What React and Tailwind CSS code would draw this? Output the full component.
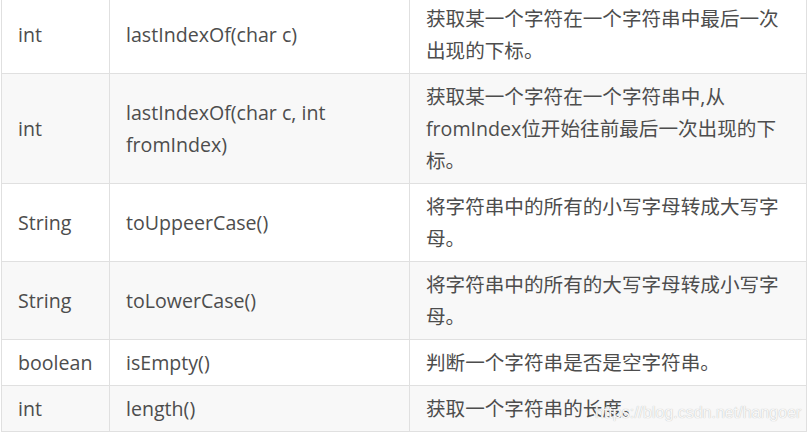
const rows = [
  { type: 'int', method: 'lastIndexOf(char c)', desc: '获取某一个字符在一个字符串中最后一次出现的下标。' },
  { type: 'int', method: 'lastIndexOf(char c, int fromIndex)', desc: '获取某一个字符在一个字符串中,从fromIndex位开始往前最后一次出现的下标。' },
  { type: 'String', method: 'toUppeerCase()', desc: '将字符串中的所有的小写字母转成大写字母。' },
  { type: 'String', method: 'toLowerCase()', desc: '将字符串中的所有的大写字母转成小写字母。' },
  { type: 'boolean', method: 'isEmpty()', desc: '判断一个字符串是否是空字符串。' },
  { type: 'int', method: 'length()', desc: '获取一个字符串的长度。' },
];

export default function App() {
  return (
    <div className="relative h-[434px] w-[810px] overflow-hidden bg-white pl-px font-['Open_Sans','Noto_Sans_CJK_SC',sans-serif] text-[19.6px] leading-[32px] text-[#4d4d4d]">
      <table className="-mt-[5px] table-fixed border-collapse">
        <colgroup>
          <col className="w-[108px]" />
          <col className="w-[300px]" />
          <col className="w-[397px]" />
        </colgroup>
        <tbody>
          {rows.map((r, i) => (
            <tr key={i} className={i % 2 === 1 ? 'bg-[#f8f8f8]' : 'bg-white'}>
              <td className="border border-[#e0e0e0] px-4 py-[6.5px] align-middle">{r.type}</td>
              <td className="border border-[#e0e0e0] px-4 py-[6.5px] align-middle">{r.method}</td>
              <td className="border border-[#e0e0e0] px-4 py-[6.5px] align-middle">{r.desc}</td>
            </tr>
          ))}
        </tbody>
      </table>

      {/* watermark */}
      <div className="pointer-events-none absolute left-[595px] top-[403px] font-['Liberation_Sans',Arial,sans-serif] text-[16px] leading-[20px] text-[#f8f8f8] [text-shadow:0_0_1px_#b0b0b0]">
        https://blog.csdn.net/hangoer
      </div>
    </div>
  );
}
